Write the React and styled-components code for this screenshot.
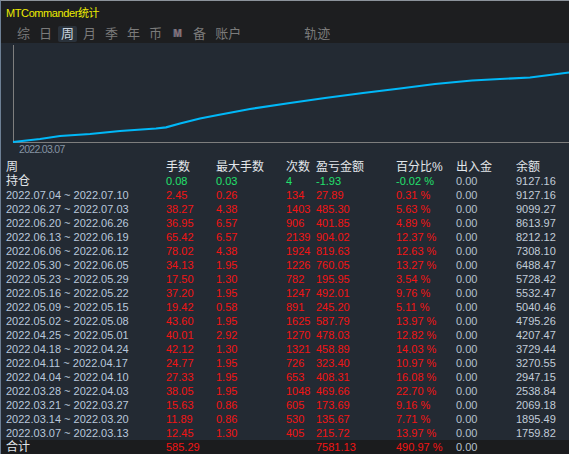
import React from "react";
import styled, { createGlobalStyle } from "styled-components";

const Global = createGlobalStyle`
  html, body { margin: 0; padding: 0; background: #232a33; }
  body { font-family: "Liberation Sans", "Noto Sans CJK SC", sans-serif; }
`;

const Window = styled.div`
  width: 568px;
  height: 453px;
  overflow: hidden;
  background: #232a33;
  border-left: 1px solid #6d7f94;
  border-top: 1px solid #8c939b;
  display: flex;
  flex-direction: column;
`;

const Header = styled.div`
  background: #1d1e20;
  display: flex;
  flex-direction: column;
`;

const TitleBar = styled.div`
  height: 21px;
  display: flex;
  align-items: center;
  padding-left: 5px;
  color: #ecec00;
  font-size: 11px;
  letter-spacing: -0.4px;
`;

const TabBar = styled.div`
  height: 16px;
  padding: 4px 0 1px 13px;
  display: flex;
  gap: 3px;
`;

const Tab = styled.div`
  min-width: 19px;
  padding: 0 3px;
  box-sizing: border-box;
  height: 16px;
  line-height: 16px;
  text-align: center;
  font-size: 13px;
  color: ${(p) => (p.$active ? "#c9d3dd" : "#7b7b7b")};
  background: ${(p) => (p.$active ? "#2a323b" : "transparent")};
  border-radius: 2px;
  margin-left: ${(p) => p.$offset || 0}px;
`;

const MarkTab = styled(Tab)`
  font-size: 10px;
  font-weight: bold;
  color: #86787e;
  text-shadow: 0.6px 0 #5a3a48, -0.6px 0 #3e5670;
`;

const Chart = styled.div`
  height: 117px;
  svg { display: block; }
`;

const Table = styled.div`
  display: flex;
  flex-direction: column;
`;

const Row = styled.div`
  display: grid;
  grid-template-columns: 160px 50px 70px 30px 80px 60px 60px 1fr;
  height: 14px;
  line-height: 14px;
  padding-left: 5px;
  font-size: ${(p) => (p.$head ? "12px" : "11px")};
  background: ${(p) => (p.$foot ? "#1b1c1e" : "transparent")};
  white-space: nowrap;
`;

const toneColor = {
  head: "#e2e6ea",
  date: "#b9c8dc",
  red: "#f21414",
  green: "#22e06c",
  gray: "#b6c1ce",
  bal: "#c2ccd8",
};

const Cell = styled.span`
  color: ${(p) => toneColor[p.$tone] || "#b6c1ce"};
  font-size: ${(p) => (p.$big ? "12px" : "inherit")};
`;

const rows = [
  ["2022.07.04 ~ 2022.07.10", "2.45", "0.26", "134", "27.89", "0.31 %", "0.00", "9127.16"],
  ["2022.06.27 ~ 2022.07.03", "38.27", "4.38", "1403", "485.30", "5.63 %", "0.00", "9099.27"],
  ["2022.06.20 ~ 2022.06.26", "36.95", "6.57", "906", "401.85", "4.89 %", "0.00", "8613.97"],
  ["2022.06.13 ~ 2022.06.19", "65.42", "6.57", "2139", "904.02", "12.37 %", "0.00", "8212.12"],
  ["2022.06.06 ~ 2022.06.12", "78.02", "4.38", "1924", "819.63", "12.63 %", "0.00", "7308.10"],
  ["2022.05.30 ~ 2022.06.05", "34.13", "1.95", "1226", "760.05", "13.27 %", "0.00", "6488.47"],
  ["2022.05.23 ~ 2022.05.29", "17.50", "1.30", "782", "195.95", "3.54 %", "0.00", "5728.42"],
  ["2022.05.16 ~ 2022.05.22", "37.20", "1.95", "1247", "492.01", "9.76 %", "0.00", "5532.47"],
  ["2022.05.09 ~ 2022.05.15", "19.42", "0.58", "891", "245.20", "5.11 %", "0.00", "5040.46"],
  ["2022.05.02 ~ 2022.05.08", "43.60", "1.95", "1625", "587.79", "13.97 %", "0.00", "4795.26"],
  ["2022.04.25 ~ 2022.05.01", "40.01", "2.92", "1270", "478.03", "12.82 %", "0.00", "4207.47"],
  ["2022.04.18 ~ 2022.04.24", "42.12", "1.30", "1321", "458.89", "14.03 %", "0.00", "3729.44"],
  ["2022.04.11 ~ 2022.04.17", "24.77", "1.95", "726", "323.40", "10.97 %", "0.00", "3270.55"],
  ["2022.04.04 ~ 2022.04.10", "27.33", "1.95", "653", "408.31", "16.08 %", "0.00", "2947.15"],
  ["2022.03.28 ~ 2022.04.03", "38.05", "1.95", "1048", "469.66", "22.70 %", "0.00", "2538.84"],
  ["2022.03.21 ~ 2022.03.27", "15.63", "0.86", "605", "173.69", "9.16 %", "0.00", "2069.18"],
  ["2022.03.14 ~ 2022.03.20", "11.89", "0.86", "530", "135.67", "7.71 %", "0.00", "1895.49"],
  ["2022.03.07 ~ 2022.03.13", "12.45", "1.30", "405", "215.72", "13.97 %", "0.00", "1759.82"],
];

const heads = ["周", "手数", "最大手数", "次数", "盈亏金额", "百分比%", "出入金", "余额"];

const curve = [
  [13, 142], [40, 139], [60, 136], [90, 134], [120, 131], [156, 128.5], [166, 127.3],
  [180, 123.5], [200, 118.5], [218, 115], [250, 109], [290, 103], [325, 98],
  [363, 93], [400, 88.5], [435, 84], [472, 80.5], [500, 79], [530, 77.5], [569, 72.5],
];

function EquityChart() {
  const pts = curve.map(([x, y]) => `${x - 1},${y - 43}`).join(" ");
  return (
    <Chart>
      <svg width="568" height="117" viewBox="0 0 568 117">
        <line x1="12.5" y1="2" x2="12.5" y2="99.5" stroke="#7e7e7e" strokeWidth="1" />
        <line x1="12" y1="99.5" x2="568" y2="99.5" stroke="#7e7e7e" strokeWidth="1" />
        <polyline points={pts} fill="none" stroke="#00b8f8" strokeWidth="2.2" />
        <text
          x="18"
          y="110"
          fill="#8694a3"
          fontSize="10.5"
          letterSpacing="-0.7"
          fontFamily="Liberation Sans, sans-serif"
        >
          2022.03.07
        </text>
      </svg>
    </Chart>
  );
}

export default function App() {
  const tabs = ["综", "日", "周", "月", "季", "年", "币"];
  return (
    <>
      <Global />
      <Window>
        <Header>
          <TitleBar>MTCommander统计</TitleBar>
          <TabBar>
            {tabs.map((t) => (
              <Tab key={t} $active={t === "周"}>{t}</Tab>
            ))}
            <MarkTab>M</MarkTab>
            <Tab>备</Tab>
            <Tab>账户</Tab>
            <Tab $offset={54}>轨迹</Tab>
          </TabBar>
        </Header>
        <EquityChart />
        <Table>
          <Row $head>
            {heads.map((h) => (
              <Cell key={h} $tone="head">{h}</Cell>
            ))}
          </Row>
          <Row>
            <Cell $tone="head" $big>持仓</Cell>
            <Cell $tone="green">0.08</Cell>
            <Cell $tone="green">0.03</Cell>
            <Cell $tone="green">4</Cell>
            <Cell $tone="green">-1.93</Cell>
            <Cell $tone="green">-0.02 %</Cell>
            <Cell $tone="gray">0.00</Cell>
            <Cell $tone="bal">9127.16</Cell>
          </Row>
          {rows.map((r) => (
            <Row key={r[0]}>
              <Cell $tone="date">{r[0]}</Cell>
              <Cell $tone="red">{r[1]}</Cell>
              <Cell $tone="red">{r[2]}</Cell>
              <Cell $tone="red">{r[3]}</Cell>
              <Cell $tone="red">{r[4]}</Cell>
              <Cell $tone="red">{r[5]}</Cell>
              <Cell $tone="gray">{r[6]}</Cell>
              <Cell $tone="bal">{r[7]}</Cell>
            </Row>
          ))}
          <Row $foot>
            <Cell $tone="head" $big>合计</Cell>
            <Cell $tone="red">585.29</Cell>
            <Cell />
            <Cell />
            <Cell $tone="red">7581.13</Cell>
            <Cell $tone="red">490.97 %</Cell>
            <Cell $tone="gray">0.00</Cell>
            <Cell />
          </Row>
        </Table>
      </Window>
    </>
  );
}
